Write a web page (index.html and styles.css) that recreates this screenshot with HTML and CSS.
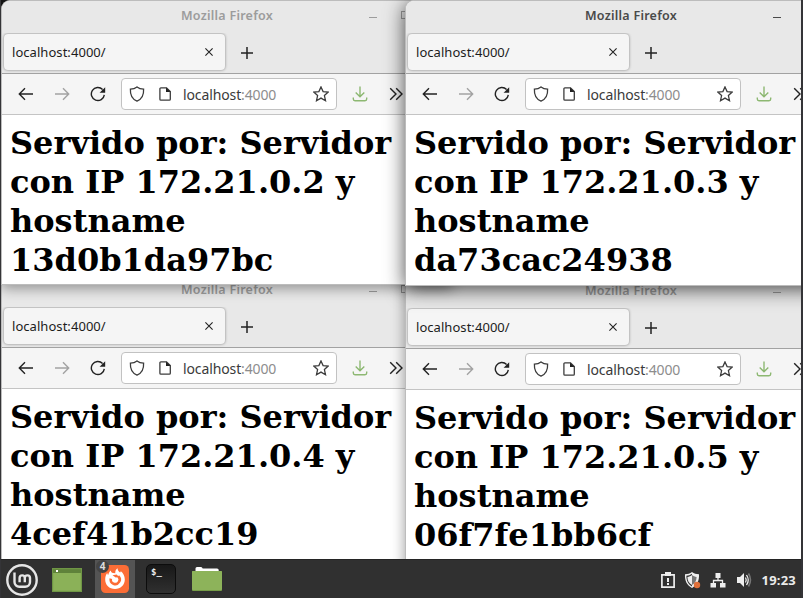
FILE: index.html
```
<!DOCTYPE html>
<html lang="es">
<head>
<meta charset="utf-8">
<title>Escritorio</title>
<link rel="stylesheet" href="styles.css">
</head>
<body>
<svg class="defs" aria-hidden="true">
  <symbol id="close" viewBox="0 0 10 10"><path d="M1.4 1.4l7.2 7.2M8.6 1.4L1.4 8.6"/></symbol>
  <symbol id="plus" viewBox="0 0 12 12"><path d="M6 0v12M0 6h12"/></symbol>
  <symbol id="back" viewBox="0 0 16 16"><path d="M15 8H1.5M7 2.2L1.3 8 7 13.8"/></symbol>
  <symbol id="forward" viewBox="0 0 16 16"><path d="M1 8h13.5M9 2.2L14.7 8 9 13.8"/></symbol>
  <symbol id="reload" viewBox="0 0 16 16"><path d="M14.3 8.8A6.5 6.5 0 1 1 12.6 3.6"/><path class="solid" d="M15.2 1.2v5.6H9.6z"/></symbol>
  <symbol id="shield" viewBox="0 0 16 16"><path d="M8 .9C6.2 2.3 3.8 3 1.4 3.1c-.3 5.2 1.6 10 6.6 12 5-2 6.9-6.8 6.6-12C12.200 3 9.800 2.300 8 .9z"/></symbol>
  <symbol id="page" viewBox="0 0 14 16"><path d="M2.900 1.800h5.600l3.800 3.800v7.600a1 1 0 0 1-1 1H2.900a1 1 0 0 1-1-1V2.800a1 1 0 0 1 1-1z"/><path class="solid" d="M8 1.500v4.600h4.600z"/></symbol>
  <symbol id="star" viewBox="0 0 16 16"><path d="M8 .9l2.100 4.700 5.100.5-3.800 3.500 1.100 5.100L8 12.100l-4.500 2.600 1.100-5.100L.8 6.100l5.100-.5z"/></symbol>
  <symbol id="download" viewBox="0 0 16 16"><path d="M8 .5v10M3.700 6.500L8 10.700l4.300-4.200M1.300 11.500v1.600a1.700 1.700 0 0 0 1.700 1.700h10a1.700 1.700 0 0 0 1.700-1.700v-1.600"/></symbol>
  <symbol id="more" viewBox="0 0 14 14"><path d="M1.200 1.200L7 7l-5.800 5.800M7.200 1.200L13 7l-5.800 5.800"/></symbol>
</svg>

<main class="desktop">
  <section class="window w3">
    <header class="titlebar"><span>Mozilla Firefox</span><i class="min"></i><i class="max"></i></header>
    <div class="tabs"><div class="tab"><span>localhost:4000/</span><svg class="close"><use href="#close"/></svg></div><svg class="plus"><use href="#plus"/></svg></div>
    <nav class="toolbar">
      <span class="btn"><svg><use href="#back"/></svg></span><span class="btn off"><svg><use href="#forward"/></svg></span><span class="btn"><svg><use href="#reload"/></svg></span>
      <div class="url"><svg class="shield"><use href="#shield"/></svg><svg class="page"><use href="#page"/></svg><span class="address">localhost<em>:4000</em></span><svg class="star"><use href="#star"/></svg></div>
      <span class="btn dl"><svg><use href="#download"/></svg></span><span class="btn more"><svg><use href="#more"/></svg></span>
    </nav>
    <article><h1>Servido por: Servidor con IP 172.21.0.4 y hostname 4cef41b2cc19</h1></article>
  </section>

  <section class="window w4">
    <header class="titlebar"><span>Mozilla Firefox</span><i class="min"></i><i class="max"></i></header>
    <div class="tabs"><div class="tab"><span>localhost:4000/</span><svg class="close"><use href="#close"/></svg></div><svg class="plus"><use href="#plus"/></svg></div>
    <nav class="toolbar">
      <span class="btn"><svg><use href="#back"/></svg></span><span class="btn off"><svg><use href="#forward"/></svg></span><span class="btn"><svg><use href="#reload"/></svg></span>
      <div class="url"><svg class="shield"><use href="#shield"/></svg><svg class="page"><use href="#page"/></svg><span class="address">localhost<em>:4000</em></span><svg class="star"><use href="#star"/></svg></div>
      <span class="btn dl"><svg><use href="#download"/></svg></span><span class="btn more"><svg><use href="#more"/></svg></span>
    </nav>
    <article><h1>Servido por: Servidor con IP 172.21.0.5 y hostname 06f7fe1bb6cf</h1></article>
  </section>

  <section class="window w1">
    <header class="titlebar"><span>Mozilla Firefox</span><i class="min"></i><i class="max"></i></header>
    <div class="tabs"><div class="tab"><span>localhost:4000/</span><svg class="close"><use href="#close"/></svg></div><svg class="plus"><use href="#plus"/></svg></div>
    <nav class="toolbar">
      <span class="btn"><svg><use href="#back"/></svg></span><span class="btn off"><svg><use href="#forward"/></svg></span><span class="btn"><svg><use href="#reload"/></svg></span>
      <div class="url"><svg class="shield"><use href="#shield"/></svg><svg class="page"><use href="#page"/></svg><span class="address">localhost<em>:4000</em></span><svg class="star"><use href="#star"/></svg></div>
      <span class="btn dl"><svg><use href="#download"/></svg></span><span class="btn more"><svg><use href="#more"/></svg></span>
    </nav>
    <article><h1>Servido por: Servidor con IP 172.21.0.2 y hostname 13d0b1da97bc</h1></article>
  </section>

  <section class="window w2 active">
    <header class="titlebar"><span>Mozilla Firefox</span><i class="min"></i><i class="max"></i></header>
    <div class="tabs"><div class="tab"><span>localhost:4000/</span><svg class="close"><use href="#close"/></svg></div><svg class="plus"><use href="#plus"/></svg></div>
    <nav class="toolbar">
      <span class="btn"><svg><use href="#back"/></svg></span><span class="btn off"><svg><use href="#forward"/></svg></span><span class="btn"><svg><use href="#reload"/></svg></span>
      <div class="url"><svg class="shield"><use href="#shield"/></svg><svg class="page"><use href="#page"/></svg><span class="address">localhost<em>:4000</em></span><svg class="star"><use href="#star"/></svg></div>
      <span class="btn dl"><svg><use href="#download"/></svg></span><span class="btn more"><svg><use href="#more"/></svg></span>
    </nav>
    <article><h1>Servido por: Servidor con IP 172.21.0.3 y hostname da73cac24938</h1></article>
  </section>
</main>

<footer class="panel">
  <svg class="mint" viewBox="0 0 32 32"><circle cx="16" cy="16" r="14.700"/><path d="M8.500 8.500v9.500a4.800 4.800 0 0 0 4.800 4.800h5.900a4.800 4.800 0 0 0 4.800-4.800v-4a2.600 2.600 0 0 0-5.200 0v4.300M18.800 14a2.600 2.600 0 0 0-5.200 0v4.300"/></svg>
  <svg class="files" viewBox="0 0 30 24"><path fill="#8bb158" d="M0 0h30v24H0z"/><path fill="#5f823a" d="M0 0h30v5H0z"/><path fill="none" stroke="#6f9645" d="M.5.500h29v23H.5z"/><path fill="#fff" d="M4 2h2v2H4z"/></svg>
  <div class="task">
    <svg class="fox" viewBox="0 0 28 28"><rect width="28" height="28" rx="4.500" fill="#fc6d36"/><path fill="#fff" d="M14 24C8.200 24 4.200 19.900 4.200 14.500c0-2.700.8-4.800 2-6.500.1 1 .5 1.700 1 2 .6-2.300 1.400-3.700 2.600-4.600.2 1.300.9 2.200 2.200 2.600l2.300.3c-.2-2.300.6-4 2.200-5 .2 2.100 1.200 3 2.600 4.300l.8-1.300c2.200 1.700 3.900 4.900 3.900 8.200C23.800 19.900 19.600 24 14 24z"/><path fill="none" stroke="#fc6d36" stroke-width="2.600" d="M9.800 13.600a4.500 4.500 0 1 0 7.400-2.400"/><path fill="#fc6d36" d="M11.500 10.200l4.200-.8 2.300 2.500-3.300.5z"/></svg>
    <b class="badge">4</b>
  </div>
  <div class="term">$_</div>
  <svg class="folder" viewBox="0 0 30 24"><path fill="#fff" d="M3.500 5V1.500Q3.500 0 5 0h4q1.200 0 1.700 1.500H25q1.700 0 1.700 1.500v3H3.500z"/><rect y="4" width="30" height="20" rx="1" fill="#769c47"/><rect y="4" width="30" height="19" rx="1" fill="#8db35a"/></svg>
  <div class="tray">
    <svg class="clip" viewBox="0 0 16 18"><path fill="none" stroke="#eee" stroke-width="1.700" d="M1.900 3.900h12.200v12.200H1.900z"/><path fill="#eee" d="M5 1h6v4H5zM7 7h2v4H7zM7 12h2v2H7z"/></svg>
    <svg class="update" viewBox="0 0 17 17"><path fill="#eee" d="M8 0c2 1.500 4 2.100 7 2.300.4 6-1.700 11.100-7 13.700C2.700 13.400.6 8.300 1 2.300 4 2.100 6 1.500 8 0z"/><path fill="#303030" d="M8 1.700v12.700c-4-2.200-5.700-6-5.600-10.700C4.700 3.500 6.300 2.900 8 1.700z"/><path fill="#eee" d="M8 3v9.900C4.800 11 3.500 8.500 3.400 4.900 5.200 4.700 6.700 4.100 8 3z"/><path fill="#777" d="M8 3v9.900c3.200-1.900 4.500-4.400 4.600-8C10.800 4.700 9.300 4.100 8 3z"/><circle cx="13" cy="13" r="3.200" fill="#e0703a"/></svg>
    <svg class="net" viewBox="0 0 16 16"><path fill="#eee" d="M5.500 1h5v5h-5zM.5 11H6v4.500H.5zM10 11h5.500v4.500H10z"/><path fill="none" stroke="#eee" d="M8 6v3M3.500 11V8.500h9V11"/></svg>
    <svg class="sound" viewBox="0 0 16 16"><path fill="#eee" d="M1 5h3l4-4v14l-4-4H1z"/><path fill="none" stroke="#eee" stroke-width="1.300" d="M9.500 5.500q1.500 2.500 0 5M10.500 3q3.500 5 0 10"/><path fill="none" stroke="#777" stroke-width="1.500" d="M12.500 1.500q4 6.500 0 13"/></svg>
    <time>19:23</time>
  </div>
</footer>
</body>
</html>
```
FILE: styles.css
```
* { box-sizing: border-box; }
body {
  margin: 0;
  width: 803px;
  height: 598px;
  overflow: hidden;
  padding: 0 2px 0 1px;
  background: #343437;
  font-family: "Noto Sans", sans-serif;
  display: flex;
  flex-direction: column;
}
.defs { position: absolute; width: 0; height: 0; }
.desktop { position: relative; flex: 1; overflow: hidden; background: #161616; }

.window {
  position: absolute;
  width: 451px;
  height: 285px;
  display: flex;
  flex-direction: column;
  background: #fff;
  border: solid #bcbcbc;
  border-width: 1px 0 1px 1px;
  border-radius: 9px 9px 0 0;
  overflow: hidden;
}
.w1 { left: 0; top: 0; box-shadow: 0 3px 14px rgba(0, 0, 0, .4); }
.w2 { left: 404px; top: 0; height: 286px; box-shadow: 0 3px 20px rgba(0, 0, 0, .7); }
.w3 { left: 0; top: 274px; height: 300px; }
.w4 { left: 404px; top: 275px; height: 300px; box-shadow: 0 3px 14px rgba(0, 0, 0, .4); }

.titlebar {
  position: relative;
  height: 32px;
  flex: none;
  background: #e8e8e8;
  color: #9c9c9c;
  font: 600 12.500px/30px "Noto Sans", sans-serif;
  letter-spacing: .25px;
  text-align: center;
}
.active .titlebar { color: #4a4a4a; }
.min, .max { position: absolute; }
.min { left: 367px; top: 16px; width: 8px; height: 1px; background: currentColor; }
.max { left: 399px; top: 10px; width: 8px; height: 8px; border: 1px solid; }

.tabs {
  height: 41px;
  flex: none;
  display: flex;
  padding: 1px 2px 3px;
  background: #e8e8e8;
  border-bottom: 1px solid #a2a2a2;
}
.tab {
  width: 221px;
  height: 36px;
  display: flex;
  align-items: center;
  justify-content: space-between;
  padding: 0 11px 0 8px;
  border-radius: 4px;
  background: #f5f5f5;
  box-shadow: 0 0 3px rgba(0, 0, 0, .45);
  color: #1c1c1c;
  font-size: 13px;
  line-height: 18px;
  letter-spacing: .05px;
}
svg { display: block; fill: none; stroke: #222; stroke-width: 1.300; flex: none; }
.solid { fill: #222; stroke: none; }
.close { width: 10px; height: 10px; stroke-width: 1.100; }
.plus { width: 12px; height: 12px; margin: 13px 0 0 16px; stroke-width: 1.500; }

.toolbar {
  height: 41px;
  flex: none;
  display: flex;
  align-items: center;
  padding-left: 6px;
  background: #f5f5f5;
  border-bottom: 1px solid #c4c4c4;
}
.btn { width: 36px; display: flex; justify-content: center; }
.btn svg { width: 16px; height: 16px; stroke-width: 1.400; }
.btn.off svg { stroke: #a2a2a2; }
.btn.dl { margin-left: 5px; }
.btn.dl svg { stroke: #8db872; }
.btn.more { margin-left: 0; }
.btn.more svg { width: 14px; height: 14px; }
.url {
  width: 216px;
  height: 32px;
  margin-left: 5px;
  display: flex;
  align-items: center;
  padding: 0 7px;
  border: 1px solid #c2c2c2;
  border-radius: 4px;
  background: #fff;
  color: #3a3a3a;
  font-size: 14px;
  letter-spacing: -.12px;
}
.url em { color: #8d8d8d; font-style: normal; }
.shield, .star, .url .page { stroke: #3c3c3c; }
.shield { width: 16px; height: 16px; }
.page { width: 14px; height: 16px; margin: 0 11px 0 13px; }
.star { width: 16px; height: 16px; margin-left: auto; }

article { padding: 9px 8px 0; }
h1 {
  margin: 0;
  width: 400px;
  font: bold 32px/39px "DejaVu Serif", serif;
  color: #000;
}

.panel {
  position: relative;
  height: 39px;
  flex: none;
  display: flex;
  align-items: center;
  padding: 2px 5px 0;
  background: #303030;
  border-top: 1px solid #242424;
}
.panel svg { stroke: none; }
.panel .mint { width: 32px; height: 32px; stroke: #e6e6e6; stroke-width: 2.400; }
.files { width: 30px; height: 24px; margin-left: 14px; }
.task {
  position: relative;
  width: 40px;
  height: 38px;
  margin: -2px 0 0 13px;
  padding: 5px 6px;
  background: #545454;
}
.fox { width: 28px; height: 28px; }
.badge {
  position: absolute;
  left: 1px;
  top: 0;
  width: 13px;
  height: 13px;
  border-radius: 50%;
  background: #444;
  color: #ddd;
  font-size: 10px;
  line-height: 13px;
  text-align: center;
}
.term {
  width: 30px;
  height: 30px;
  margin: -2px 0 0 11px;
  padding: 2px 4px;
  border: 1px solid #0c0c0c;
  border-radius: 5px;
  background: linear-gradient(#181818, #303030);
  color: #eee;
  font: bold 9px/11px "DejaVu Sans Mono", monospace;
}
.folder { width: 30px; height: 24px; margin: -2px 0 0 16px; }
.tray { margin-left: auto; display: flex; align-items: center; }
.clip { width: 16px; height: 18px; }
.update { width: 17px; height: 17px; margin-left: 8px; }
.net { width: 16px; height: 16px; margin-left: 9px; }
.sound { width: 16px; height: 16px; margin-left: 10px; }
time { margin-left: 10px; color: #eaeaea; font: bold 13px/18px "Noto Sans", sans-serif; letter-spacing: .2px; }
```
